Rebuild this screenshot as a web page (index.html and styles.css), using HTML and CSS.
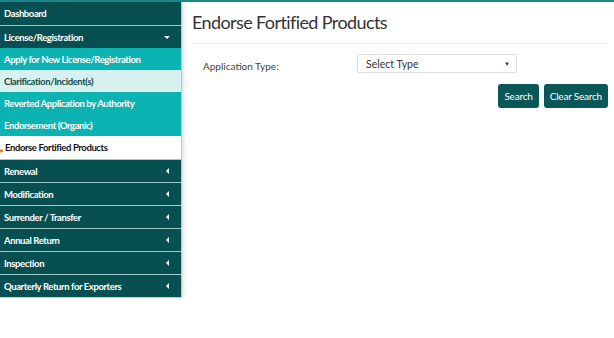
FILE: index.html
```html
<!DOCTYPE html>
<html>
<head>
<meta charset="utf-8">
<link rel="stylesheet" href="styles.css">
</head>
<body>
<div class="page">
  <nav class="sidebar">
    <div class="item">Dashboard</div>
    <div class="item open">License/Registration <span class="caret-down"></span></div>
    <div class="sub teal">Apply for New License/Registration</div>
    <div class="sub light">Clarification/Incident(s)</div>
    <div class="sub teal">Reverted Application by Authority</div>
    <div class="sub teal">Endorsement (Organic)</div>
    <div class="sub active"><span class="mark"></span>Endorse Fortified Products</div>
    <div class="item">Renewal <span class="caret-left"></span></div>
    <div class="item">Modification <span class="caret-left"></span></div>
    <div class="item">Surrender / Transfer <span class="caret-left"></span></div>
    <div class="item">Annual Return <span class="caret-left"></span></div>
    <div class="item">Inspection <span class="caret-left"></span></div>
    <div class="item">Quarterly Return for Exporters <span class="caret-left"></span></div>
  </nav>
  <main class="main">
    <h1 class="title">Endorse Fortified Products</h1>
    <div class="form-row">
      <label class="label">Application Type:</label>
      <div class="select">Select Type <span class="arrow">&#9660;</span></div>
    </div>
    <div class="actions">
      <button class="btn">Search</button>
      <button class="btn">Clear Search</button>
    </div>
  </main>
</div>
</body>
</html>
```
FILE: styles.css
```css
* { box-sizing: border-box; }
html, body { margin: 0; padding: 0; background: #fff; }
body { font-family: Lato, "Liberation Sans", sans-serif; }
.page {
  display: flex;
  align-items: flex-start;
  border-top: 2px solid #1d8a8a;
}
.sidebar {
  width: 182px;
  flex: none;
  background: #074f50;
  border-right: 1px solid #b9c9c9;
  box-shadow: 2px 0 4px rgba(0,0,0,0.12);
  border-bottom: 1px solid #a9d6d6;
}
.item, .sub {
  white-space: nowrap;
  font-weight: bold;
  font-size: 9.5px;
  letter-spacing: -0.4px;
}
.item {
  height: 23px;
  display: flex;
  align-items: center;
  justify-content: space-between;
  padding: 0 10px 0 4px;
  color: #fff;
  border-top: 1px solid #9fcaca;
}
.item:first-child { border-top: none; }
.sub {
  height: 22px;
  display: flex;
  align-items: center;
  padding: 0 4px;
  color: #fff;
}
.sub.teal { background: #0bb3b3; }
.sub.light { background: #d7f0f0; color: #134f50; }
.sub.active { background: #fff; color: #111; height: 23px; }
.mark {
  display: inline-block;
  width: 3px; height: 3px;
  border-left: 2px solid #d98a1f;
  border-bottom: 2px solid #d98a1f;
  margin-left: -4px;
  margin-right: 2px;
  margin-top: 6px;
  transform: rotate(-20deg);
}
.caret-down {
  width: 0; height: 0;
  border-left: 3px solid transparent;
  border-right: 3px solid transparent;
  border-top: 3px solid #fff;
  margin-right: 1px;
}
.caret-left {
  width: 0; height: 0;
  border-top: 3px solid transparent;
  border-bottom: 3px solid transparent;
  border-right: 3px solid #fff;
  margin-right: 2px;
}
.main {
  flex: 1;
  padding: 10px 6px 0 10px;
}
.title {
  margin: 0;
  font-weight: normal;
  font-size: 18px;
  letter-spacing: -0.6px;
  color: #333;
  padding-bottom: 10px;
  border-bottom: 1px solid #eee;
  line-height: 21px;
}
.form-row {
  display: flex;
  align-items: center;
  margin-top: 10px;
  padding-left: 11px;
}
.label {
  width: 154px;
  font-size: 10px;
  color: #444;
  padding-top: 4px;
}
.select {
  width: 160px;
  height: 19px;
  border: 1px solid #ddd;
  border-radius: 2px;
  font-size: 10.5px;
  color: #333;
  display: flex;
  align-items: center;
  justify-content: space-between;
  padding: 0 6px 0 8px;
}
.arrow { font-size: 6px; color: #333; }
.actions {
  display: flex;
  justify-content: flex-end;
  gap: 5px;
  margin-top: 11px;
}
.btn {
  height: 24px;
  background: #0a5757;
  color: #fff;
  border: none;
  border-radius: 3px;
  font-family: Lato, sans-serif;
  font-size: 10px;
  letter-spacing: -0.2px;
  padding: 0 6px;
}
```
